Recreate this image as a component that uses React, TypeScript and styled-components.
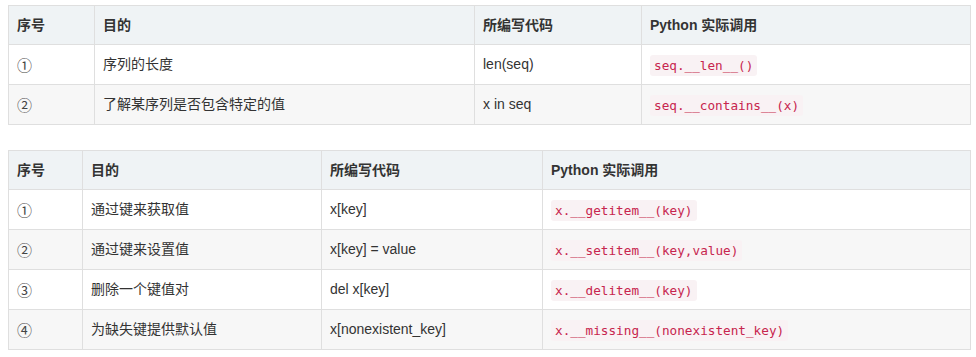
import React from "react";
import styled, { createGlobalStyle } from "styled-components";

const Global = createGlobalStyle`
  html, body { margin: 0; padding: 0; background: #fff; }
  body {
    font-family: "Liberation Sans", Arial, "Noto Sans CJK SC", sans-serif;
    color: #333;
    font-size: 14px;
  }
`;

const Page = styled.div`
  padding: 5px 0 0 8px;
  width: 962px;
  display: flex;
  flex-direction: column;
  gap: 25px;
`;

const Table = styled.table`
  width: 962px;
  border-collapse: collapse;
  table-layout: fixed;
`;

const Th = styled.th`
  background: #eff3f5;
  border: 1px solid #dfdfdf;
  padding: 8px;
  height: 22px;
  line-height: 22px;
  text-align: left;
  font-weight: bold;
  color: #333;
  font-size: 14px;
`;

const Row = styled.tr<{ $alt: boolean }>`
  background: ${(p) => (p.$alt ? "#f7f7f7" : "#fff")};
`;

const Td = styled.td`
  border: 1px solid #dfdfdf;
  padding: 8px;
  height: 23px;
  line-height: 23px;
  vertical-align: middle;
  color: #333;
  font-size: 14px;
`;

const IndexTd = styled(Td)`
  font-family: "Noto Sans CJK SC", sans-serif;
  font-size: 15px;
  color: #444;
`;

const Code = styled.code`
  display: inline-block;
  font-family: "DejaVu Sans Mono", "Liberation Mono", monospace;
  font-size: 12.7px;
  line-height: 17px;
  padding: 2px 4px;
  color: #c7254e;
  background: #f9f2f4;
  border-radius: 3px;
  vertical-align: middle;
`;

type Data = {
  widths: number[];
  rows: [string, string, string, string][];
};

const headers = ["序号", "目的", "所编写代码", "Python 实际调用"];

const tables: Data[] = [
  {
    widths: [86, 380, 167, 329],
    rows: [
      ["①", "序列的长度", "len(seq)", "seq.__len__()"],
      ["②", "了解某序列是否包含特定的值", "x in seq", "seq.__contains__(x)"],
    ],
  },
  {
    widths: [74, 239, 221, 428],
    rows: [
      ["①", "通过键来获取值", "x[key]", "x.__getitem__(key)"],
      ["②", "通过键来设置值", "x[key] = value", "x.__setitem__(key,value)"],
      ["③", "删除一个键值对", "del x[key]", "x.__delitem__(key)"],
      ["④", "为缺失键提供默认值", "x[nonexistent_key]", "x.__missing__(nonexistent_key)"],
    ],
  },
];

export default function App() {
  return (
    <>
      <Global />
      <Page>
        {tables.map((t, ti) => (
          <Table key={ti}>
            <colgroup>
              {t.widths.map((w, i) => (
                <col key={i} style={{ width: w }} />
              ))}
            </colgroup>
            <thead>
              <tr>
                {headers.map((h) => (
                  <Th key={h}>{h}</Th>
                ))}
              </tr>
            </thead>
            <tbody>
              {t.rows.map((r, ri) => (
                <Row key={ri} $alt={ri % 2 === 1}>
                  <IndexTd>{r[0]}</IndexTd>
                  <Td>{r[1]}</Td>
                  <Td>{r[2]}</Td>
                  <Td>
                    <Code>{r[3]}</Code>
                  </Td>
                </Row>
              ))}
            </tbody>
          </Table>
        ))}
      </Page>
    </>
  );
}
